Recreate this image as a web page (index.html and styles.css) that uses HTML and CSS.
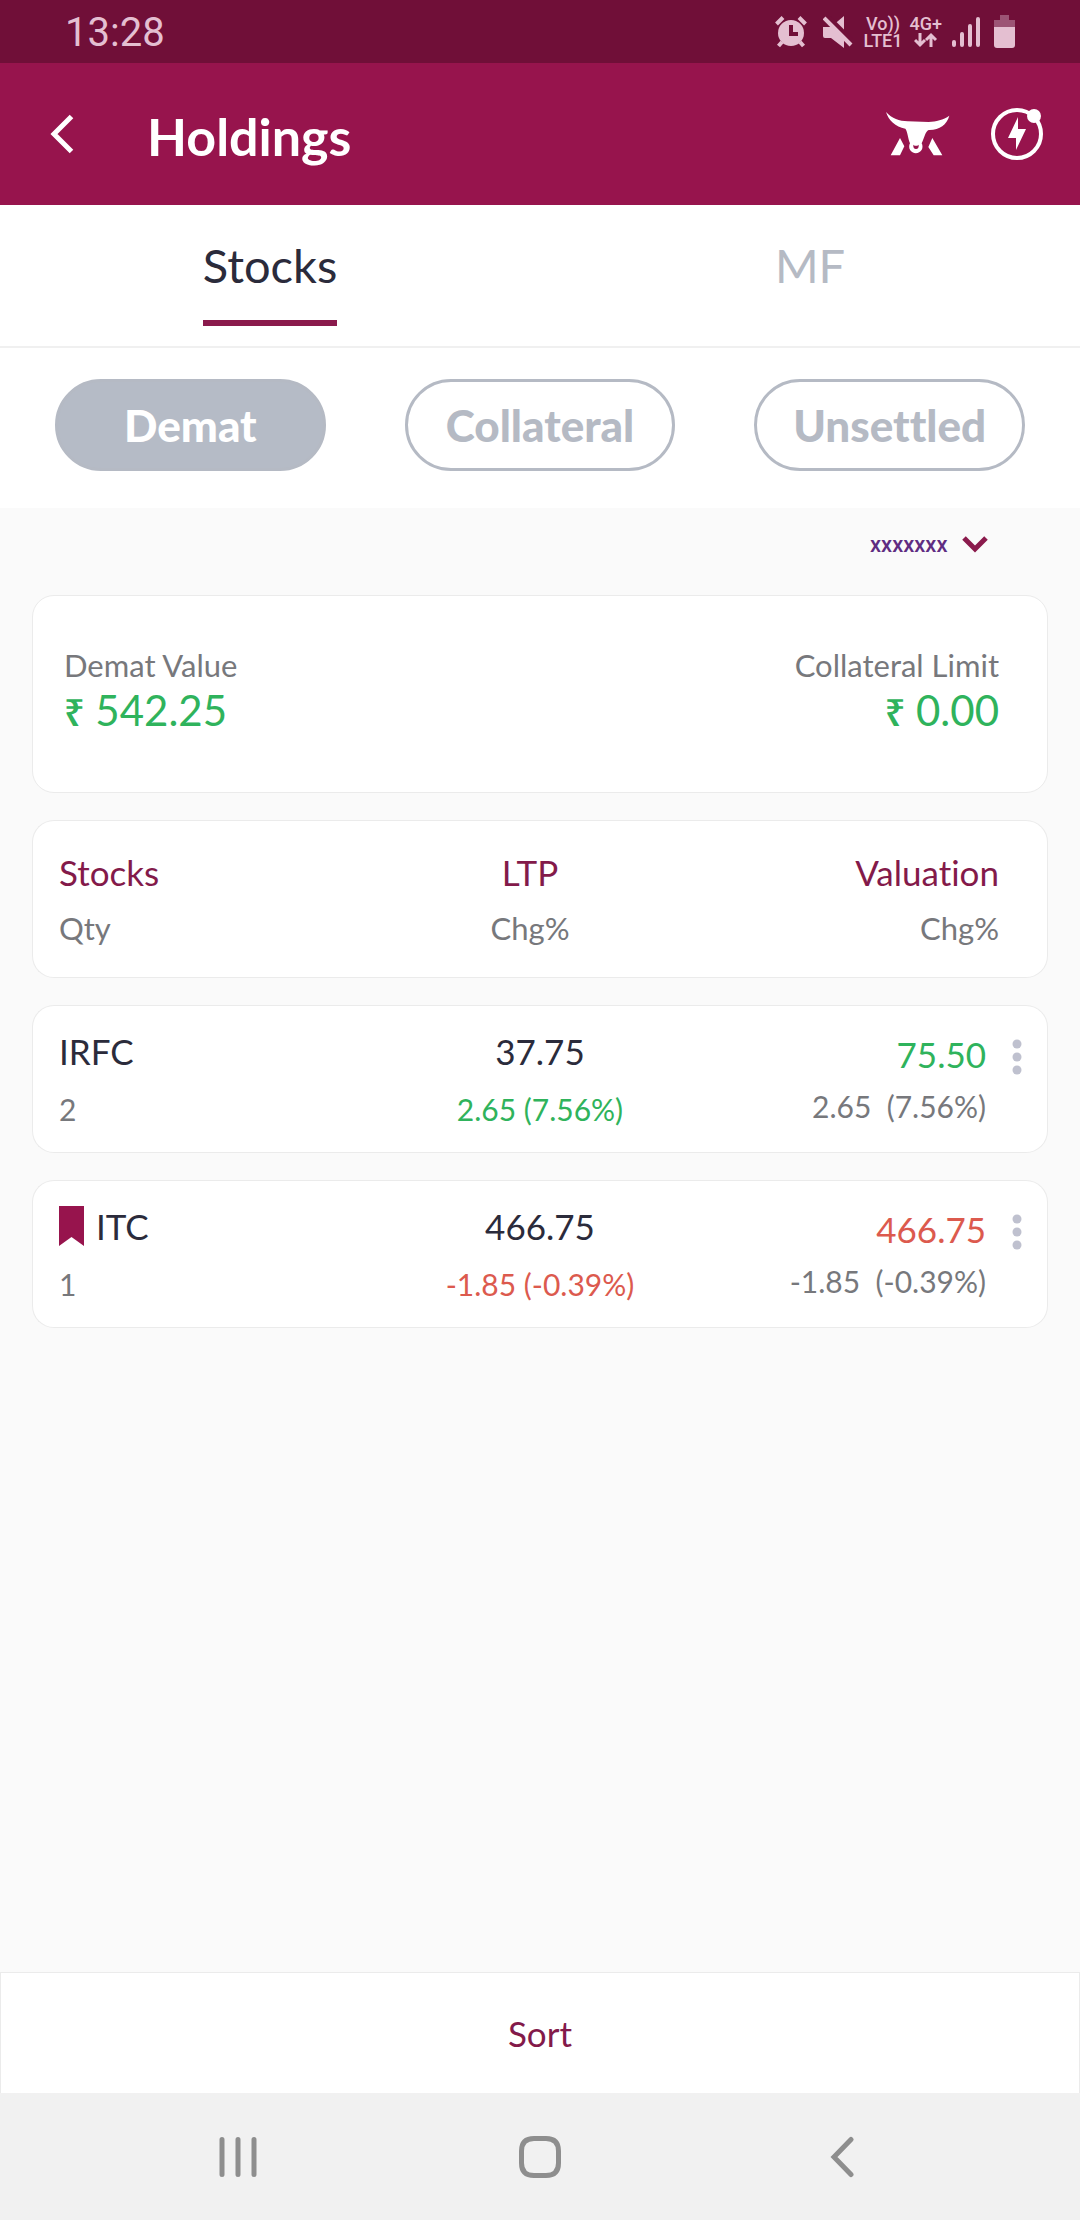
FILE: index.html
```html
<!DOCTYPE html>
<html lang="en">
<head>
    <meta charset="UTF-8">
    <meta name="viewport" content="width=device-width, initial-scale=1.0">
    <title>Holdings</title>
    <link rel="stylesheet" href="styles.css">
</head>
<body>
    <div class="status-bar">
        <span class="clock">13:28</span>
        <div class="status-icons">
            <svg class="alarm" width="32" height="32" viewBox="0 0 32 32">
                <circle cx="16" cy="17" r="13" fill="currentColor"/>
                <path d="M1.5 8L8 1.5M30.500 8L24 1.500M7 26l-3.500 4M25 26l3.500 4" stroke="currentColor" stroke-width="4" fill="none"/>
                <path d="M16 9v9h7" stroke="#700f38" stroke-width="4" fill="none"/>
            </svg>
            <svg class="mute" width="30" height="32" viewBox="0 0 30 32">
                <path d="M0 11h8L21 0v32L8 22H2q-2 0-2-2z" fill="currentColor"/>
                <path d="M3-1L31 27" stroke="#700f38" stroke-width="5"/>
                <path d="M1 2l27 27" stroke="currentColor" stroke-width="4"/>
            </svg>
            <div class="network volte">
                <span>Vo))</span>
                <span>LTE1</span>
            </div>
            <div class="network">
                <span>4G+</span>
                <svg width="24" height="16" viewBox="0 0 24 16">
                    <path d="M6 1v12M1 8l5 5 5-5M17 15V4M12 8l5-5 5 5" stroke="currentColor" stroke-width="3" fill="none"/>
                </svg>
            </div>
            <svg class="signal" width="28" height="30" viewBox="0 0 28 30">
                <path d="M2 25v3M10 17v11M18 9v19M26 2v26" stroke="currentColor" stroke-width="4" stroke-linecap="round"/>
            </svg>
            <svg class="battery" width="22" height="33" viewBox="0 0 22 33">
                <path d="M6 0h9v5h6v7H0V5h6z" fill="#9c5475"/>
                <path d="M0 12h21v18q0 3-3 3H3q-3 0-3-3z" fill="currentColor"/>
            </svg>
        </div>
    </div>

    <header class="header">
        <button class="icon-btn" aria-label="Back">
            <svg width="24" height="40" viewBox="0 0 24 40">
                <path d="M21.500 2.500L4 20l17.500 17.500" stroke="currentColor" stroke-width="5" fill="none"/>
            </svg>
        </button>
        <h1 class="title">Holdings</h1>
        <button class="icon-btn" aria-label="Markets">
            <svg width="64" height="44" viewBox="0 0 192 132">
                <path d="M0 0C18 20 40 27 65 28L128 30C150 28 172 24 190 11C182 38 160 55 128 54C118 58 114 80 107 94A20 20 0 1 1 72 94C66 80 64 56 58 50C28 45 8 25 0 0z" fill="currentColor"/>
                <path d="M82 98l4 3h8l4-3q1 13-8 13t-8-13z" fill="#97144d"/>
                <path d="M42 78L55 103L42 130H14zM139 78L127 105L143 130H169z" fill="currentColor"/>
            </svg>
        </button>
        <button class="icon-btn" aria-label="Quick actions">
            <svg width="54" height="54" viewBox="0 0 54 54">
                <circle cx="27" cy="27" r="24" stroke="currentColor" stroke-width="4" fill="none"/>
                <circle cx="44" cy="9" r="7" fill="currentColor"/>
                <path d="M28 10L18 31h8l0 12 10-21h-8z" fill="currentColor"/>
            </svg>
        </button>
    </header>

    <nav class="tabs">
        <div class="tab-cell"><button class="tab active">Stocks</button></div>
        <div class="tab-cell"><button class="tab">MF</button></div>
    </nav>

    <div class="filters">
        <button class="pill selected">Demat</button>
        <button class="pill">Collateral</button>
        <button class="pill">Unsettled</button>
    </div>

    <main class="content">
        <div class="account">
            <select class="account-select" aria-label="Account">
                <option>xxxxxxx</option>
            </select>
            <svg width="26" height="17" viewBox="0 0 26 17">
                <path d="M2 2l11 11L24 2" stroke="currentColor" stroke-width="5" fill="none"/>
            </svg>
        </div>

        <section class="summary">
            <div>
                <div class="summary-label">Demat Value</div>
                <div class="summary-value"><span class="rupee">₹</span> 542.25</div>
            </div>
            <div class="align-right">
                <div class="summary-label">Collateral Limit</div>
                <div class="summary-value"><span class="rupee">₹</span> 0.00</div>
            </div>
        </section>

        <table class="holdings">
            <colgroup>
                <col class="col-stock">
                <col class="col-ltp">
                <col>
                <col class="col-menu">
            </colgroup>
            <thead>
                <tr>
                    <th><span class="main">Stocks</span><span class="sub">Qty</span></th>
                    <th class="ltp"><span class="main">LTP</span><span class="sub">Chg%</span></th>
                    <th class="valuation" colspan="2"><span class="main">Valuation</span><span class="sub">Chg%</span></th>
                </tr>
            </thead>
            <tbody>
                <tr>
                    <td><span class="main">IRFC</span><span class="sub">2</span></td>
                    <td class="ltp"><span class="main">37.75</span><span class="sub up">2.65 (7.56%)</span></td>
                    <td class="valuation"><span class="main up">75.50</span><span class="sub">2.65&nbsp; (7.56%)</span></td>
                    <td class="menu">
                        <button class="icon-btn" aria-label="IRFC options">
                            <svg width="10" height="36" viewBox="0 0 10 36">
                                <g fill="currentColor"><circle cx="5" cy="5" r="4.500"/><circle cx="5" cy="18" r="4.500"/><circle cx="5" cy="31" r="4.500"/></g>
                            </svg>
                        </button>
                    </td>
                </tr>
                <tr>
                    <td>
                        <span class="main marked">
                            <svg width="25" height="40" viewBox="0 0 25 40"><path d="M0 0h25v40l-12.500-9L0 40z" fill="#97144d"/></svg>
                            ITC
                        </span>
                        <span class="sub">1</span>
                    </td>
                    <td class="ltp"><span class="main">466.75</span><span class="sub down">-1.85 (-0.39%)</span></td>
                    <td class="valuation"><span class="main down">466.75</span><span class="sub">-1.85&nbsp; (-0.39%)</span></td>
                    <td class="menu">
                        <button class="icon-btn" aria-label="ITC options">
                            <svg width="10" height="36" viewBox="0 0 10 36">
                                <g fill="currentColor"><circle cx="5" cy="5" r="4.500"/><circle cx="5" cy="18" r="4.500"/><circle cx="5" cy="31" r="4.500"/></g>
                            </svg>
                        </button>
                    </td>
                </tr>
            </tbody>
        </table>
    </main>

    <button class="sort">Sort</button>

    <!-- system navigation -->
    <nav class="nav-bar">
        <button class="icon-btn" aria-label="Recent apps">
            <svg width="38" height="42" viewBox="0 0 38 42">
                <path d="M3 3.500v35M19 3.500v35M35 3.500v35" stroke="currentColor" stroke-width="5" stroke-linecap="round"/>
            </svg>
        </button>
        <button class="icon-btn" aria-label="Home">
            <svg width="42" height="42" viewBox="0 0 42 42">
                <path d="M15 2.500h12Q39.500 2.500 39.500 15v12Q39.500 39.500 27 39.500H15Q2.500 39.500 2.500 27V15Q2.500 2.500 15 2.500z" stroke="currentColor" stroke-width="5" fill="none"/>
            </svg>
        </button>
        <button class="icon-btn" aria-label="Back">
            <svg width="24" height="42" viewBox="0 0 24 42">
                <path d="M21 3.500L4 21l17 17.500" stroke="currentColor" stroke-width="5" stroke-linecap="round" fill="none"/>
            </svg>
        </button>
    </nav>
</body>
</html>
```

FILE: styles.css
```css
* {
    box-sizing: border-box;
}
body {
    display: flex;
    flex-direction: column;
    min-height: 100vh;
    margin: 0;
    background-color: #fafafa;
    font-family: 'Lato', sans-serif;
    font-variant-ligatures: none;
    color: #2b2b3b;
}
button {
    font-family: inherit;
    font-variant-ligatures: none;
    cursor: pointer;
}
svg {
    display: block;
    flex-shrink: 0;
}
.icon-btn {
    display: flex;
    padding: 0;
    border: none;
    background: none;
    color: inherit;
}

/* Status bar */
.status-bar {
    display: flex;
    align-items: center;
    justify-content: space-between;
    height: 63px;
    padding: 0 64px 0 65px;
    background-color: #700f38;
    color: #e4bfd1;
    font-family: 'Roboto', sans-serif;
}
.clock {
    padding-top: 2px;
    font-size: 40px;
    line-height: 48px;
}
.status-icons {
    display: flex;
    align-items: center;
}
.alarm {
    margin-right: 16px;
}
.mute {
    margin-right: 11px;
}
.network {
    display: flex;
    flex-direction: column;
    align-items: center;
    font-size: 18px;
    font-weight: 500;
    line-height: 17px;
}
.volte {
    margin-right: 7px;
}
.signal {
    margin: 0 14px 0 10px;
}

/* Header */
.header {
    display: flex;
    align-items: center;
    height: 142px;
    padding: 0 36px 0 50px;
    background-color: #97144d;
    color: #ffffff;
}
.title {
    flex: 1;
    margin: 0 0 0 73px;
    padding-top: 4px;
    font-size: 52px;
    font-weight: 700;
    line-height: 60px;
}
.header .icon-btn + .icon-btn {
    margin-left: 40px;
}

/* Stocks / MF tabs */
.tabs {
    display: flex;
    padding: 32px 0 20px;
    background-color: #ffffff;
    border-bottom: 2px solid #f0f0f0;
}
.tab-cell {
    flex: 1;
    text-align: center;
}
.tab {
    padding: 0 0 27px;
    border: none;
    border-bottom: 6px solid transparent;
    background: none;
    font-size: 47px;
    line-height: 56px;
    color: #b5bac4;
}
.tab.active {
    border-color: #8a1a4c;
    color: #2b2b3b;
}

/* Filter pills */
.filters {
    display: flex;
    gap: 79px;
    padding: 31px 55px 37px;
    background-color: #ffffff;
}
.pill {
    flex: 1 1 0;
    min-width: 0;
    height: 92px;
    padding: 0;
    border: 3px solid #b5bac4;
    border-radius: 46px;
    background-color: #ffffff;
    font-size: 44px;
    font-weight: 900;
    color: #b5bac4;
}
.pill.selected {
    background-color: #b5bbc6;
    color: #ffffff;
}

.content {
    flex: 1;
    padding: 0 32px;
}
.account {
    display: flex;
    align-items: center;
    justify-content: flex-end;
    gap: 14px;
    padding: 20px 60px 35px 0;
    color: #8a1a4c;
}
.account-select {
    appearance: none;
    height: 32px;
    padding: 0;
    border: none;
    background: none;
    font-family: 'Roboto', sans-serif;
    font-size: 22px;
    font-weight: 500;
    color: #5f2c82;
}

/* Cards */
.summary {
    display: flex;
    justify-content: space-between;
    padding: 49px 48px 57px 31px;
    border: 1px solid #ebebeb;
    border-radius: 22px;
    background-color: #ffffff;
}
.summary-label {
    font-size: 31px;
    line-height: 40px;
    color: #77787c;
}
.summary-value {
    font-size: 42px;
    line-height: 50px;
    color: #2fb35c;
}
.rupee {
    font-family: 'Noto Sans', sans-serif;
    font-size: 36px;
    font-weight: 600;
    line-height: 36px;
}
.align-right {
    text-align: right;
}

.holdings {
    width: 100%;
    table-layout: fixed;
    border-collapse: separate;
    border-spacing: 0 27px;
}
.col-stock {
    width: 30%;
}
.col-ltp {
    width: 40%;
}
.col-menu {
    width: 62px;
}
.holdings th,
.holdings td {
    padding: 24px 0;
    border: 1px solid #ebebeb;
    border-width: 1px 0;
    background-color: #ffffff;
    font-weight: 400;
    text-align: left;
    vertical-align: middle;
}
.holdings th {
    padding: 30px 0;
    color: #831a4a;
}
.holdings th:first-child,
.holdings td:first-child {
    padding-left: 26px;
    border-left-width: 1px;
    border-radius: 22px 0 0 22px;
}
.holdings th:last-child,
.holdings td:last-child {
    border-right-width: 1px;
    border-radius: 0 22px 22px 0;
}
.holdings .ltp {
    text-align: center;
}
.holdings th.ltp {
    padding-right: 20px;
}
.holdings .valuation {
    text-align: right;
}
.holdings th.valuation {
    padding-right: 48px;
}
.main {
    display: block;
    font-size: 35px;
    line-height: 42px;
}
.marked {
    display: flex;
    align-items: center;
    gap: 12px;
}
.sub {
    display: block;
    margin-top: 16px;
    font-size: 31px;
    line-height: 38px;
    color: #77787c;
}
td .sub {
    margin-top: 18px;
    font-size: 30px;
}
td.valuation .sub {
    margin-top: 12px;
}
.up {
    color: #2fb35c;
}
.down {
    color: #dc5a4e;
}
.holdings td.menu {
    padding: 0;
    color: #bfc1cf;
}
.menu .icon-btn {
    margin: 0 auto 44px;
}

/* Bottom bars */
.sort {
    height: 121px;
    border: 1px solid #ebebeb;
    border-bottom: none;
    background-color: #ffffff;
    font-size: 35px;
    color: #831a4a;
}
.nav-bar {
    display: grid;
    grid-template-columns: repeat(3, 1fr);
    align-items: center;
    justify-items: center;
    height: 127px;
    padding: 0 87px;
    background-color: #f1f1f1;
    color: #8e8e8e;
}
```
